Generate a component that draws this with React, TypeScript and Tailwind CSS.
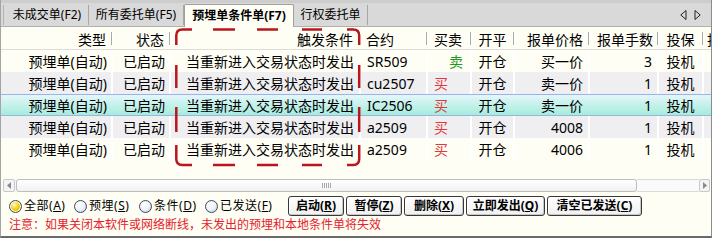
import React from "react";

type Row = {
  type: string;
  status: string;
  cond: string;
  inst: string;
  side: string;
  oc: string;
  price: string;
  qty: string;
  hedge: string;
};

const rows: Row[] = [
  { type: "预埋单(自动)", status: "已启动", cond: "当重新进入交易状态时发出", inst: "SR509", side: "卖", oc: "开仓", price: "买一价", qty: "3", hedge: "投机" },
  { type: "预埋单(自动)", status: "已启动", cond: "当重新进入交易状态时发出", inst: "cu2507", side: "买", oc: "开仓", price: "卖一价", qty: "1", hedge: "投机" },
  { type: "预埋单(自动)", status: "已启动", cond: "当重新进入交易状态时发出", inst: "IC2506", side: "买", oc: "开仓", price: "卖一价", qty: "1", hedge: "投机" },
  { type: "预埋单(自动)", status: "已启动", cond: "当重新进入交易状态时发出", inst: "a2509", side: "买", oc: "开仓", price: "4008", qty: "1", hedge: "投机" },
  { type: "预埋单(自动)", status: "已启动", cond: "当重新进入交易状态时发出", inst: "a2509", side: "买", oc: "开仓", price: "4006", qty: "1", hedge: "投机" },
];

const Sep = () => (
  <span className="w-[2px] h-[13px] shrink-0 border-l border-[#a9a9a9] border-r border-r-white" />
);

function HeaderCell({ w, align, label }: { w: string; align: string; label: string }) {
  return (
    <div className={`${w} shrink-0 h-full flex items-center`}>
      <div className={`flex-1 flex ${align} whitespace-nowrap pt-[3px] leading-[17px]`}>{label}</div>
      <Sep />
    </div>
  );
}

function Radio({ checked, label, acc, w }: { checked?: boolean; label: string; acc: string; w: string }) {
  return (
    <div className={`${w} flex items-center shrink-0`}>
      <span
        className={
          checked
            ? "w-[13px] h-[13px] shrink-0 rounded-full border border-[#3c4a5e] bg-[radial-gradient(circle_at_40%_35%,#fffbd0_0%,#f5d000_45%,#d09a00_100%)] shadow-[inset_0_0_0_1px_#ffffff]"
            : "w-[13px] h-[13px] shrink-0 rounded-full border border-[#3c4a5e] bg-[radial-gradient(circle_at_40%_35%,#ffffff_0%,#eef2f8_50%,#b7c3d6_100%)]"
        }
      />
      <span className="ml-[2px] text-[12px] leading-[16px] whitespace-nowrap tracking-[0.5px]">
        {label}(<span className="underline underline-offset-1">{acc}</span>)
      </span>
    </div>
  );
}

function Btn({ w, label, acc }: { w: string; label: string; acc: string }) {
  return (
    <div
      className={`${w} h-[20px] shrink-0 flex items-center justify-center rounded-[3px] border border-[#383838] bg-[linear-gradient(to_bottom,#ffffff,#f0f0f0)] shadow-[inset_-1px_-1px_0_#c8c8c8,inset_1px_1px_0_#ffffff] text-[12px] font-bold leading-[16px] whitespace-nowrap`}
    >
      {label}(<span className="underline underline-offset-1">{acc}</span>)
    </div>
  );
}

export default function App() {
  return (
    <div className="relative w-[712px] h-[238px] overflow-hidden bg-[#fefef4] border-l border-[#a4a4a4] border-r border-r-[#8c8c8c] border-b-2 border-b-[#6a6a6a] flex flex-col text-black [font-family:'Noto_Sans','Noto_Sans_CJK_SC',sans-serif]">
      {/* tab strip */}
      <div className="h-[27px] shrink-0 flex items-end bg-[#d9d9d9] border-t-[3px] border-t-[#cdcdcd] border-b border-b-[#b0b0b0] pl-[2px] text-[12px] leading-[16px]">
        <div className="w-[86px] h-[20px] mb-px flex items-center justify-center pl-[2px] border-l border-[#b4b4b4] border-r border-r-[#a6a6a6] whitespace-nowrap">
          未成交单(F2)
        </div>
        <div className="w-[95px] h-[20px] mb-px flex items-center justify-center border-r border-[#a6a6a6] whitespace-nowrap">
          所有委托单(F5)
        </div>
        <div className="w-[110px] h-[23px] -mb-px flex items-center justify-center bg-[#fefef4] border-x border-t border-[#a0a0a0] rounded-t-[2px] font-bold whitespace-nowrap">
          预埋单条件单(F7)
        </div>
        <div className="w-[74px] h-[20px] mb-px flex items-center justify-center border-r border-[#a6a6a6] whitespace-nowrap">
          行权委托单
        </div>
        <div className="ml-auto mr-[10px] mb-[6px] flex items-center gap-[7px]">
          <svg width="7" height="10" viewBox="0 0 7 10">
            <path d="M6 0.5 L0.8 5 L6 9.5 Z" fill="none" stroke="#222" strokeWidth="1" />
          </svg>
          <svg width="7" height="10" viewBox="0 0 7 10">
            <path d="M1 0.5 L6.2 5 L1 9.5 Z" fill="none" stroke="#222" strokeWidth="1" />
          </svg>
        </div>
      </div>

      {/* header */}
      <div className="h-[23px] shrink-0 flex border-b border-[#dcdcdc] text-[14px]">
        <HeaderCell w="w-[112px]" align="justify-end pr-[5px]" label="类型" />
        <HeaderCell w="w-[58px]" align="justify-end pr-[5px]" label="状态" />
        <HeaderCell w="w-[190px]" align="justify-end pr-[6px]" label="触发条件" />
        <HeaderCell w="w-[67px]" align="justify-start pl-[5px]" label="合约" />
        <HeaderCell w="w-[44px]" align="justify-start pl-[6px]" label="买卖" />
        <HeaderCell w="w-[43px]" align="justify-center" label="开平" />
        <HeaderCell w="w-[75px]" align="justify-end pr-[5px]" label="报单价格" />
        <HeaderCell w="w-[69px]" align="justify-end pr-[4px]" label="报单手数" />
        <HeaderCell w="w-[45px]" align="justify-center" label="投保" />
        <div className="flex-1 h-full flex items-center pl-[3px] pt-[3px] leading-[17px] whitespace-nowrap">投资</div>
      </div>

      {/* rows */}
      <div className="shrink-0 flex flex-col text-[14px] leading-[17px]">
        {rows.map((r, i) => {
          const sel = i === 2;
          const rowCls = sel
            ? "bg-[linear-gradient(to_bottom,#e4f6fb,#a5ecdb)] border-y border-[#9ab4ea]"
            : i % 2 === 1
            ? "bg-[#efeff2]"
            : "bg-[#fefef4]";
          const b = sel ? "border-r-2 border-transparent" : "border-r-2 border-white";
          return (
            <div key={i} className={`h-[22px] flex ${rowCls}`}>
              <div className={`w-[112px] shrink-0 flex items-center justify-end pr-[4px] ${b}`}>{r.type}</div>
              <div className={`w-[58px] shrink-0 flex items-center justify-end pr-[4px] ${b}`}>{r.status}</div>
              <div className={`w-[190px] shrink-0 flex items-center justify-end pr-[5px] ${b} whitespace-nowrap`}>{r.cond}</div>
              <div className={`w-[67px] shrink-0 flex items-center justify-start pl-[6px] ${b}`}>{r.inst}</div>
              <div className={`w-[44px] shrink-0 flex items-center justify-start ${b} ${r.side === "卖" ? "pl-[21px] text-[#1f9a1f]" : "pl-[6px] text-[#e23a3a]"}`}>
                {r.side}
              </div>
              <div className={`w-[43px] shrink-0 flex items-center justify-center ${b}`}>{r.oc}</div>
              <div className={`w-[75px] shrink-0 flex items-center justify-end pr-[5px] ${b}`}>{r.price}</div>
              <div className={`w-[69px] shrink-0 flex items-center justify-end pr-[5px] ${b}`}>{r.qty}</div>
              <div className={`w-[45px] shrink-0 flex items-center justify-center ${b}`}>{r.hedge}</div>
              <div className="flex-1" />
            </div>
          );
        })}
      </div>

      <div className="h-[19px] shrink-0" />

      {/* horizontal scrollbar */}
      <div className="h-[13px] shrink-0 flex ml-[2px] mr-[1px] bg-[#f6f6f6]">
        <div className="w-[12px] h-full flex items-center justify-center rounded-[2px] border border-[#c9c9c9] bg-[#f4f4f4]">
          <svg width="4" height="7" viewBox="0 0 4 7">
            <path d="M4 0 L0 3.5 L4 7 Z" fill="#8a8a8a" />
          </svg>
        </div>
        <div className="w-[621px] h-full ml-px flex items-center justify-center rounded-[3px] border border-[#bdbdbd] bg-[linear-gradient(to_bottom,#ffffff,#f1f1f1)]">
          <div className="flex gap-[1px]">
            <span className="w-px h-[5px] bg-[#a8a8a8]" />
            <span className="w-px h-[5px] bg-[#a8a8a8]" />
            <span className="w-px h-[5px] bg-[#a8a8a8]" />
            <span className="w-px h-[5px] bg-[#a8a8a8]" />
            <span className="w-px h-[5px] bg-[#a8a8a8]" />
          </div>
        </div>
        <div className="flex-1 h-full border-y border-[#dadada] bg-[#fafafa]" />
        <div className="w-[11px] h-full flex items-center justify-center rounded-[2px] border border-[#c9c9c9] bg-[#f4f4f4]">
          <svg width="4" height="7" viewBox="0 0 4 7">
            <path d="M0 0 L4 3.5 L0 7 Z" fill="#8a8a8a" />
          </svg>
        </div>
      </div>

      {/* controls */}
      <div className="h-[20px] mt-[4px] shrink-0 flex items-center pl-[8px]">
        <Radio w="w-[65px]" checked label="全部" acc="A" />
        <Radio w="w-[65px]" label="预埋" acc="S" />
        <Radio w="w-[66px]" label="条件" acc="D" />
        <Radio w="w-[83px]" label="已发送" acc="F" />
        <div className="flex gap-[2px]">
          <Btn w="w-[56px]" label="启动" acc="R" />
          <Btn w="w-[56px]" label="暂停" acc="Z" />
          <Btn w="w-[60px]" label="删除" acc="X" />
          <Btn w="w-[79px]" label="立即发出" acc="Q" />
          <Btn w="w-[95px]" label="清空已发送" acc="C" />
        </div>
      </div>

      <div className="h-[16px] mt-px shrink-0 pl-[8px] flex items-center text-[12px] leading-[16px] text-[#e5222b] whitespace-nowrap">
        注意：如果关闭本软件或网络断线，未发出的预埋和本地条件单将失效
      </div>
      <div className="flex-1" />

      {/* red dashed annotation */}
      <svg className="absolute left-[-1px] top-0 pointer-events-none" width="712" height="238" viewBox="0 0 712 238">
        <g fill="none" stroke="#b8171c" strokeWidth="2.5" strokeLinecap="butt">
          <path d="M176.3 45 V35.5 Q176.3 29.5 182.3 29.5 H192" />
          <path d="M213 29.5 H235 M257 29.5 H278 M302 29.5 H322" />
          <path d="M347 29.5 H353.2 Q359.2 29.5 359.2 35.5 V45" />
          <path d="M176.3 65 V88 M176.3 107 V132" />
          <path d="M359.2 65 V88 M359.2 107 V132" />
          <path d="M176.3 145 V159 Q176.3 165 182.3 165 H192" />
          <path d="M213 165 H235 M257 165 H278 M302 165 H322" />
          <path d="M347 165 H353.2 Q359.2 165 359.2 159 V145" />
        </g>
      </svg>
    </div>
  );
}
